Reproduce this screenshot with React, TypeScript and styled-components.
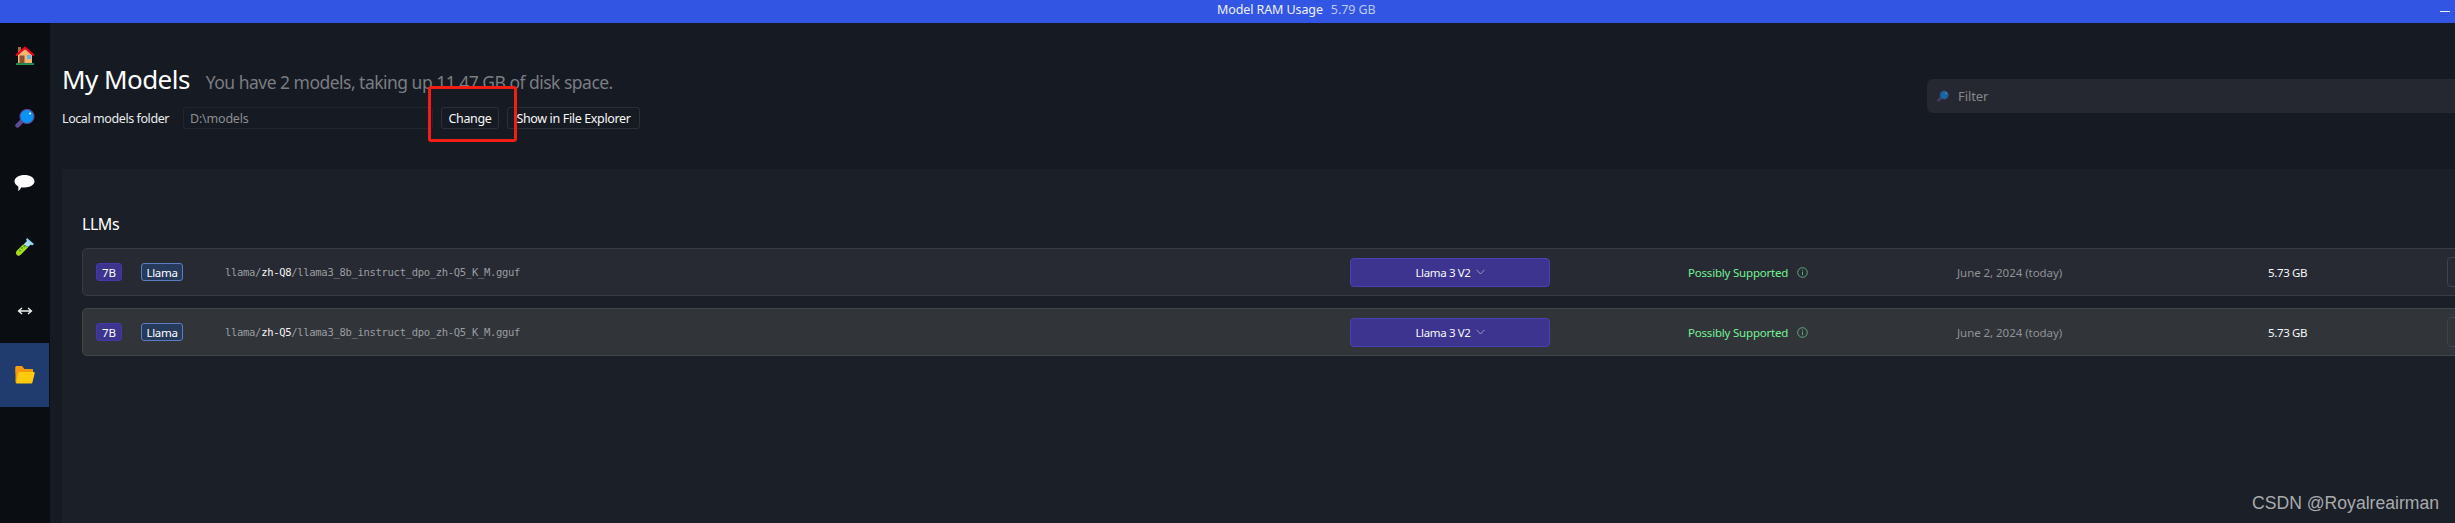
import React from 'react';
import styled, { createGlobalStyle } from 'styled-components';

const GlobalStyle = createGlobalStyle`
  html, body {
    margin: 0;
    width: 100%;
    height: 100%;
    overflow: hidden;
    background: #161a22;
  }
  * { box-sizing: border-box; }
`;

const Page = styled.div`
  position: relative;
  width: 2455px;
  height: 523px;
  overflow: hidden;
  display: flex;
  flex-direction: column;
  font-family: 'Noto Sans', 'Open Sans', sans-serif;
  color: #fff;
`;

const TopBar = styled.div`
  height: 23px;
  flex: none;
  display: grid;
  grid-template-columns: 1217px auto 1fr;
  align-items: center;
  background: #3256e3;
  font-size: 12.5px;
  padding-bottom: 4px;
`;

const RamLabel = styled.span`
  grid-column: 2;
  color: #eef0fc;
  letter-spacing: -0.1px;
`;

const RamValue = styled.span`
  color: #bcc8f5;
  margin-left: 8px;
`;

const Minimize = styled.span`
  justify-self: end;
  width: 10px;
  height: 1px;
  margin-right: 5px;
  margin-top: 4px;
  background: #fff;
`;

const Body = styled.div`
  flex: 1;
  display: flex;
  min-height: 0;
`;

const Sidebar = styled.nav`
  width: 50px;
  flex: none;
  background: #0a0d11;
  display: flex;
  flex-direction: column;
`;

const NavItem = styled.div<{ $active?: boolean }>`
  width: 49px;
  height: 64px;
  display: flex;
  align-items: center;
  justify-content: center;
  background: ${(p) => (p.$active ? '#203c6e' : 'transparent')};
`;

const Main = styled.main`
  flex: 1;
  min-width: 0;
  display: flex;
  flex-direction: column;
  padding-left: 12px;
`;

const Header = styled.header`
  height: 146px;
  flex: none;
  display: grid;
  grid-template-columns: 1865px 1fr;
`;

const TitleBlock = styled.div`
  padding-top: 38px;
`;

const TitleRow = styled.div`
  display: flex;
  align-items: baseline;
  height: 36px;
`;

const Title = styled.h1`
  margin: 0;
  font-size: 26px;
  font-weight: 400;
  letter-spacing: -0.55px;
  line-height: 36px;
`;

const Subtitle = styled.span`
  margin-left: 16px;
  font-size: 17.5px;
  color: #7a7d82;
  letter-spacing: -0.52px;
`;

const FolderRow = styled.div`
  display: flex;
  align-items: center;
  height: 22px;
  margin-top: 10px;
  font-size: 12.5px;
`;

const FolderLabel = styled.span`
  width: 121px;
  color: #ececee;
  letter-spacing: -0.42px;
`;

const FolderInput = styled.div`
  width: 250px;
  height: 22px;
  padding-left: 6px;
  display: flex;
  align-items: center;
  border: 1px solid #22262e;
  border-radius: 3px;
  color: #8c8e93;
  letter-spacing: -0.2px;
`;

const OutlineButton = styled.button<{ $w: number }>`
  height: 22px;
  margin-left: 8px;
  padding: 0;
  width: ${(p) => p.$w}px;
  background: transparent;
  border: 1px solid #2b2f37;
  border-radius: 3px;
  color: #f8f8f8;
  font: inherit;
  letter-spacing: -0.35px;
  white-space: nowrap;
`;

const FilterColumn = styled.div`
  padding-top: 56px;
`;

const FilterBox = styled.div`
  height: 34px;
  width: 560px;
  display: flex;
  align-items: center;
  gap: 9px;
  padding-left: 10px;
  background: #252830;
  border-radius: 6px;
  color: #85878a;
  font-size: 13px;
  letter-spacing: -0.1px;
`;

const Panel = styled.section`
  flex: 1;
  background: #1b1f27;
  padding: 44px 0 0 20px;
`;

const SectionTitle = styled.h2`
  margin: 0 0 13px;
  height: 22px;
  line-height: 22px;
  font-size: 16px;
  font-weight: 400;
  letter-spacing: -0.45px;
`;

const RowList = styled.div`
  display: flex;
  flex-direction: column;
  gap: 12px;
`;

const ModelRow = styled.div<{ $alt?: boolean }>`
  width: 2420px;
  height: 48px;
  display: grid;
  grid-template-columns: 45px 84px 1125px 338px 269px 311px 179px 60px;
  align-items: center;
  padding-left: 13px;
  background: ${(p) => (p.$alt ? '#31353a' : '#272a32')};
  border: 1px solid ${(p) => (p.$alt ? '#41454a' : '#383b42')};
  border-radius: 5px;
  font-size: 11.5px;
`;

const Tag = styled.span`
  height: 18px;
  display: inline-flex;
  align-items: center;
  justify-content: center;
  border-radius: 3px;
  font-size: 11.5px;
  color: #fff;
`;

const SizeTag = styled(Tag)`
  width: 26px;
  background: #3c348f;
  border: 1px solid #4238a8;
`;

const ArchTag = styled(Tag)`
  width: 42px;
  background: #263a5c;
  border: 1px solid #5b7cc0;
  letter-spacing: -0.3px;
`;

const ModelPath = styled.span`
  font-family: 'DejaVu Sans Mono', 'Liberation Mono', monospace;
  font-size: 10.5px;
  color: #9a9da1;
  letter-spacing: -0.3px;
  white-space: nowrap;
`;

const PathStrong = styled.span`
  color: #f6f6f6;
`;

const ModelSelect = styled.div`
  width: 200px;
  height: 29px;
  display: flex;
  align-items: center;
  justify-content: center;
  gap: 5px;
  background: #3c348f;
  border: 1px solid #4a40b5;
  border-radius: 4px;
  letter-spacing: -0.35px;
  color: #f8f8fd;
`;

const Support = styled.div`
  display: flex;
  align-items: center;
  gap: 9px;
  color: #74f296;
  letter-spacing: -0.2px;
`;

const DateText = styled.span`
  color: #8f9296;
  letter-spacing: -0.05px;
`;

const SizeText = styled.span`
  color: #f6f8fa;
  letter-spacing: -0.35px;
`;

const ActionStub = styled.div`
  height: 30px;
  width: 60px;
  background: transparent;
  border: 1px solid #3c4352;
  border-radius: 4px;
`;

const Annotation = styled.div`
  position: absolute;
  left: 428px;
  top: 86px;
  width: 89px;
  height: 56px;
  border: 3px solid #f01e14;
  border-radius: 3px;
`;

const Watermark = styled.div`
  position: absolute;
  left: 2252px;
  top: 493px;
  font-family: 'Liberation Sans', Arial, sans-serif;
  font-size: 17.6px;
  line-height: 20px;
  color: #a8abae;
  white-space: nowrap;
`;

const HomeIcon = () => (
  <svg width="20" height="19" viewBox="0 0 20 19">
    <rect x="3" y="1" width="3" height="6" fill="#a56a43" />
    <path d="M3 9 L10 3 L17 9 V17 H3 Z" fill="#f4b56c" />
    <path d="M1 9.5 L10 1.5 L19 9.5" fill="none" stroke="#f5001e" strokeWidth="2" />
    <rect x="4.5" y="9.5" width="5" height="7.5" fill="#8a5138" />
    <rect x="12" y="9" width="4" height="4" fill="#5db4ee" />
    <rect x="1" y="17.4" width="18" height="1.3" fill="#2fd06c" />
  </svg>
);

const SearchIcon = ({ dim }: { dim?: boolean }) => (
  <svg width={dim ? 12 : 20} height={dim ? 13 : 20} viewBox="0 0 20 20" opacity={dim ? 0.6 : 1}>
    <path d="M6.5 12.5 L2.5 16.5" stroke="#5c4a94" strokeWidth="4.5" strokeLinecap="round" />
    <circle cx="12" cy="7.5" r="7" fill="#0b93f5" stroke="#5c4a94" strokeWidth="1.2" />
    <circle cx="15" cy="4.5" r="1" fill="#fff" />
  </svg>
);

const ChatIcon = () => (
  <svg width="21" height="18" viewBox="0 0 21 18">
    <path d="M10.5 1 C16 1 20.5 3.6 20.5 7.3 C20.5 11 16 13.5 10.5 13.5 C9.4 13.5 8.4 13.4 7.4 13.2 C6.5 15 5 16.6 3.8 17 C4.6 15.6 4.6 13.8 4.2 12.4 C2 11.2 0.5 9.4 0.5 7.3 C0.5 3.6 5 1 10.5 1 Z" fill="#fff" />
  </svg>
);

const TubeIcon = () => (
  <svg width="20" height="20" viewBox="0 0 20 20">
    <path d="M12 1 L19 7 L17 8.4 L11 3 Z" fill="#8fd6f5" />
    <path d="M12.5 3.5 L16.5 7 L13 10 L8.5 7.5 Z" fill="#a6dcf2" />
    <path d="M8 7.5 L13.2 10.2 L6 17.5 C4.6 19 2.6 19 1.6 17.8 C0.6 16.6 0.8 14.8 2 13.6 Z" fill="#a8dc14" />
    <circle cx="7" cy="11" r="0.9" fill="#1f9a6a" />
    <circle cx="5" cy="13.6" r="0.9" fill="#1f9a6a" />
    <circle cx="9.4" cy="9.4" r="0.9" fill="#1f9a6a" />
  </svg>
);

const ArrowsIcon = () => (
  <svg width="16" height="10" viewBox="0 0 16 10">
    <path d="M2 5 H14 M5 2 L1.5 5 L5 8 M11 2 L14.5 5 L11 8" fill="none" stroke="#f0f0f0" strokeWidth="1.3" />
  </svg>
);

const FolderIcon = () => (
  <svg width="20" height="18" viewBox="0 0 20 18">
    <path d="M0.5 1 C0.5 0.5 1 0 1.5 0 H7 L9.5 3 H17 C17.6 3 18 3.4 18 4 V7 H0.5 Z" fill="#f59a0c" />
    <path d="M0.5 1 H3 V17 H1.5 C1 17 0.5 16.5 0.5 16 Z" fill="#f59a0c" />
    <path d="M4.4 6 H18.6 C19.4 6 19.9 6.6 19.7 7.3 L17.4 16.4 C17.2 17.1 16.6 17.5 16 17.5 H2 C1.4 17.5 1.1 17 1.3 16.4 L3.2 7 C3.3 6.4 3.8 6 4.4 6 Z" fill="#ffc90e" />
  </svg>
);

const ChevronDown = () => (
  <svg width="9" height="6" viewBox="0 0 9 6">
    <path d="M0.5 0.8 L4.5 5 L8.5 0.8" fill="none" stroke="#9a98c4" strokeWidth="1" />
  </svg>
);

const InfoIcon = () => (
  <svg width="11" height="11" viewBox="0 0 11 11">
    <circle cx="5.5" cy="5.5" r="4.8" fill="none" stroke="#5fa87c" strokeWidth="1" />
    <path d="M5.5 4.6 V8.2" stroke="#5fa87c" strokeWidth="1" />
    <rect x="5" y="2.7" width="1" height="1" fill="#5fa87c" />
  </svg>
);

const models = [
  { quant: 'zh-Q8', alt: false },
  { quant: 'zh-Q5', alt: true },
];

const App: React.FC = () => (
  <Page>
    <GlobalStyle />
    <TopBar>
      <RamLabel>
        Model RAM Usage<RamValue>5.79 GB</RamValue>
      </RamLabel>
      <Minimize />
    </TopBar>
    <Body>
      <Sidebar>
        <NavItem><HomeIcon /></NavItem>
        <NavItem><SearchIcon /></NavItem>
        <NavItem><ChatIcon /></NavItem>
        <NavItem><TubeIcon /></NavItem>
        <NavItem><ArrowsIcon /></NavItem>
        <NavItem $active><FolderIcon /></NavItem>
      </Sidebar>
      <Main>
        <Header>
          <TitleBlock>
            <TitleRow>
              <Title>My Models</Title>
              <Subtitle>You have 2 models, taking up 11.47 GB of disk space.</Subtitle>
            </TitleRow>
            <FolderRow>
              <FolderLabel>Local models folder</FolderLabel>
              <FolderInput>D:\models</FolderInput>
              <OutlineButton $w={58}>Change</OutlineButton>
              <OutlineButton $w={133}>Show in File Explorer</OutlineButton>
            </FolderRow>
          </TitleBlock>
          <FilterColumn>
            <FilterBox>
              <SearchIcon dim />
              Filter
            </FilterBox>
          </FilterColumn>
        </Header>
        <Panel>
          <SectionTitle>LLMs</SectionTitle>
          <RowList>
            {models.map((m) => (
              <ModelRow key={m.quant} $alt={m.alt}>
                <SizeTag>7B</SizeTag>
                <ArchTag>Llama</ArchTag>
                <ModelPath>
                  llama/<PathStrong>{m.quant}</PathStrong>/llama3_8b_instruct_dpo_zh-Q5_K_M.gguf
                </ModelPath>
                <ModelSelect>
                  Llama 3 V2 <ChevronDown />
                </ModelSelect>
                <Support>
                  Possibly Supported <InfoIcon />
                </Support>
                <DateText>June 2, 2024 (today)</DateText>
                <SizeText>5.73 GB</SizeText>
                <ActionStub />
              </ModelRow>
            ))}
          </RowList>
        </Panel>
      </Main>
    </Body>
    <Annotation />
    <Watermark>CSDN @Royalreairman</Watermark>
  </Page>
);

export default App;
